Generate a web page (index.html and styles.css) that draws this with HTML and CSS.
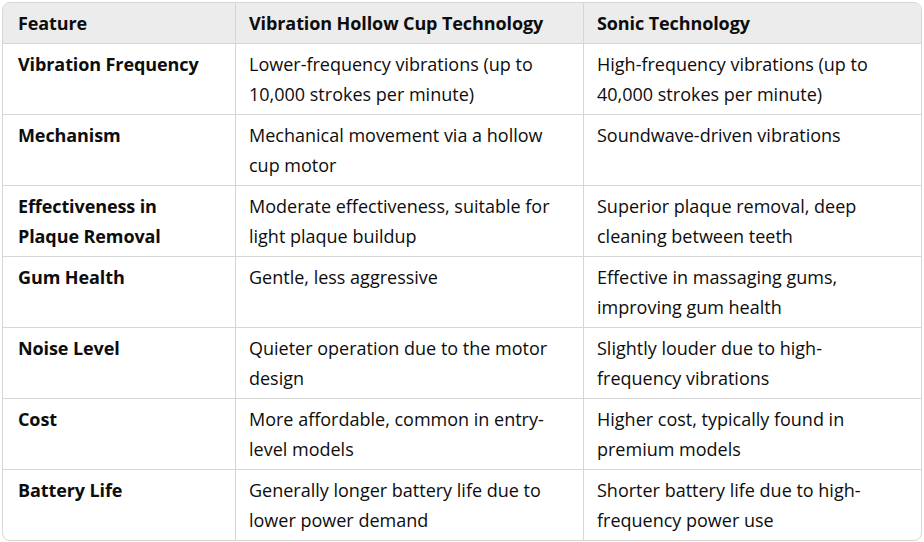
FILE: index.html
```html
<!DOCTYPE html>
<html lang="en">
<head>
<meta charset="utf-8">
<link rel="stylesheet" href="styles.css">
</head>
<body>
<div class="table-wrap">
<table class="cmp">
<colgroup><col class="c1"><col class="c2"><col class="c3"></colgroup>
<thead>
<tr><th>Feature</th><th>Vibration Hollow Cup Technology</th><th>Sonic Technology</th></tr>
</thead>
<tbody>
<tr><td class="feat">Vibration Frequency</td><td>Lower-frequency vibrations (up to<br>10,000 strokes per minute)</td><td>High-frequency vibrations (up to<br>40,000 strokes per minute)</td></tr>
<tr><td class="feat">Mechanism</td><td>Mechanical movement via a hollow<br>cup motor</td><td>Soundwave-driven vibrations</td></tr>
<tr><td class="feat">Effectiveness in<br>Plaque Removal</td><td>Moderate effectiveness, suitable for<br>light plaque buildup</td><td>Superior plaque removal, deep<br>cleaning between teeth</td></tr>
<tr><td class="feat">Gum Health</td><td>Gentle, less aggressive</td><td>Effective in massaging gums,<br>improving gum health</td></tr>
<tr><td class="feat">Noise Level</td><td>Quieter operation due to the motor<br>design</td><td>Slightly louder due to high-<br>frequency vibrations</td></tr>
<tr><td class="feat">Cost</td><td>More affordable, common in entry-<br>level models</td><td>Higher cost, typically found in<br>premium models</td></tr>
<tr><td class="feat">Battery Life</td><td>Generally longer battery life due to<br>lower power demand</td><td>Shorter battery life due to high-<br>frequency power use</td></tr>
</tbody>
</table>
</div>
</body>
</html>
```
FILE: styles.css
```css
html, body {
  margin: 0;
  padding: 0;
  background: #ffffff;
}
body {
  font-family: "Open Sans", "Noto Sans", "Liberation Sans", sans-serif;
  color: #0d0d0d;
}
.table-wrap {
  margin: 2px;
  width: 918px;
  border: 1px solid #d6d6d6;
  border-radius: 8px;
  overflow: hidden;
}
.cmp {
  width: 100%;
  border-collapse: collapse;
  table-layout: fixed;
  font-size: 18px;
  line-height: 30px;
}
.c1 { width: 232px; }
.c2 { width: 348px; }
.c3 { width: auto; }
.cmp th, .cmp td {
  padding: 5px 10px 5px 13.5px;
  text-align: left;
  vertical-align: top;
  white-space: nowrap;
  border-left: 1px solid #d6d6d6;
  border-top: 1px solid #d6d6d6;
}
.cmp th:first-child, .cmp td:first-child {
  border-left: none;
  padding-left: 15px;
}
.cmp thead th {
  border-top: none;
  background: #ececec;
  font-weight: 700;
  letter-spacing: -0.1px;
}
.cmp td {
  height: 60px;
}
.cmp td.feat {
  font-weight: 700;
  letter-spacing: -0.1px;
}
```
